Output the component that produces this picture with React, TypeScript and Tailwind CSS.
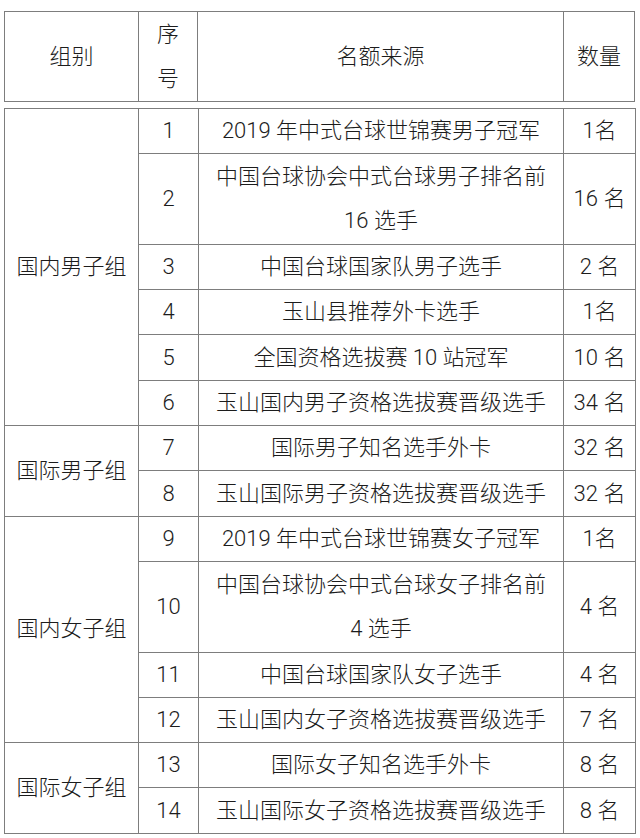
const rows: { group?: string; span?: number; no: number; src: React.ReactNode; n: string; tall?: boolean }[] = [
  { group: "国内男子组", span: 6, no: 1, src: "2019 年中式台球世锦赛男子冠军", n: "1名" },
  { no: 2, src: <>中国台球协会中式台球男子排名前<br />16 选手</>, n: "16 名", tall: true },
  { no: 3, src: "中国台球国家队男子选手", n: "2 名" },
  { no: 4, src: "玉山县推荐外卡选手", n: "1名" },
  { no: 5, src: "全国资格选拔赛 10 站冠军", n: "10 名" },
  { no: 6, src: "玉山国内男子资格选拔赛晋级选手", n: "34 名" },
  { group: "国际男子组", span: 2, no: 7, src: "国际男子知名选手外卡", n: "32 名" },
  { no: 8, src: "玉山国际男子资格选拔赛晋级选手", n: "32 名" },
  { group: "国内女子组", span: 4, no: 9, src: "2019 年中式台球世锦赛女子冠军", n: "1名" },
  { no: 10, src: <>中国台球协会中式台球女子排名前<br />4 选手</>, n: "4 名", tall: true },
  { no: 11, src: "中国台球国家队女子选手", n: "4 名" },
  { no: 12, src: "玉山国内女子资格选拔赛晋级选手", n: "7 名" },
  { group: "国际女子组", span: 2, no: 13, src: "国际女子知名选手外卡", n: "8 名" },
  { no: 14, src: "玉山国际女子资格选拔赛晋级选手", n: "8 名" },
];

const cell = "border border-[#7d7d7d] text-center align-middle p-0";

export default function App() {
  return (
    <div
      className="w-[640px] h-[838px] bg-white text-[#1c1c1c] text-[22px] leading-[44px] font-light overflow-hidden"
      style={{ fontFamily: 'Roboto, "Noto Sans CJK SC", sans-serif' }}
    >
      {/* HEADER */}
      <table className="ml-[4px] mt-[11px] w-[630px] table-fixed border-collapse">
        <colgroup>
          <col className="w-[134px]" />
          <col className="w-[59px]" />
          <col className="w-[366px]" />
          <col className="w-[71px]" />
        </colgroup>
        <tbody>
          <tr className="h-[90px]">
            <td className={cell}>组别</td>
            <td className={cell}>序<br />号</td>
            <td className={cell}>名额来源</td>
            <td className={cell}>数量</td>
          </tr>
        </tbody>
      </table>

      {/* BODY */}
      <table className="ml-[4px] mt-[6px] w-[631px] table-fixed border-collapse">
        <colgroup>
          <col className="w-[134px]" />
          <col className="w-[60px]" />
          <col className="w-[365px]" />
          <col className="w-[72px]" />
        </colgroup>
        <tbody>
          {rows.map((r) => (
            <tr key={r.no} className={r.tall ? "h-[90.6px]" : "h-[45.3px]"}>
              {r.group && (
                <td rowSpan={r.span} className={cell}>
                  {r.group}
                </td>
              )}
              <td className={cell}>{r.no}</td>
              <td className={cell}>{r.src}</td>
              <td className={cell}>{r.n}</td>
            </tr>
          ))}
        </tbody>
      </table>
    </div>
  );
}
